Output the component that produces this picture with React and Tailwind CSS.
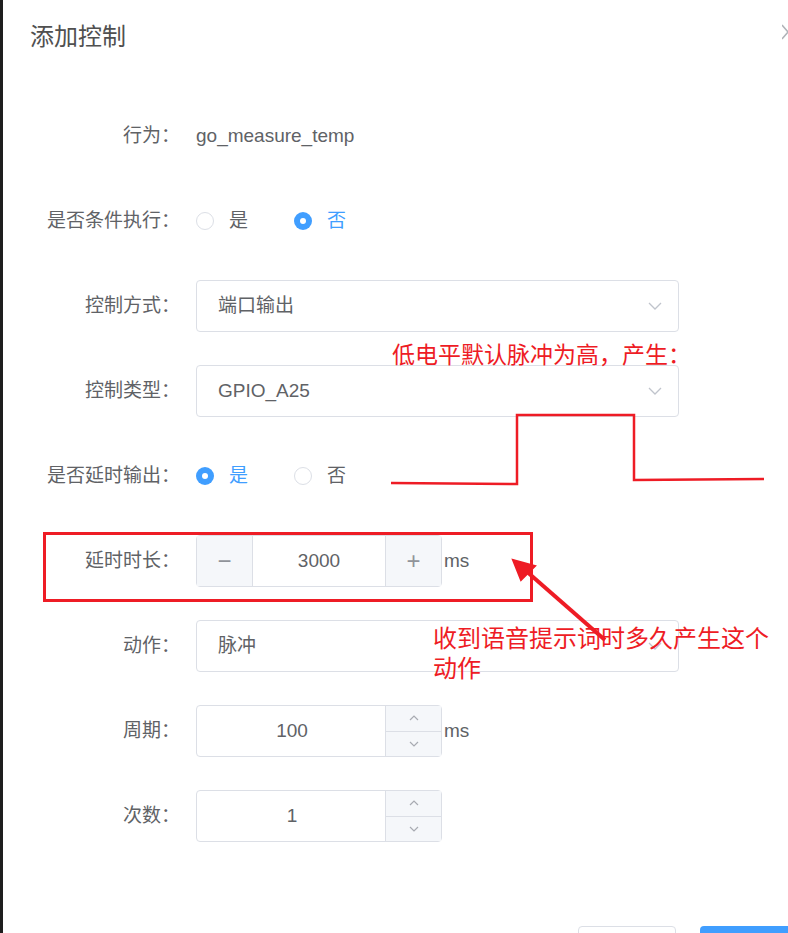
import React from "react";

const font = { fontFamily: '"Liberation Sans", "Noto Sans CJK SC", sans-serif' };

function Chevron({ up }) {
  return (
    <svg width="14" height="8" viewBox="0 0 14 8" fill="none" stroke="#c0c4cc" strokeWidth="1.3">
      {up ? <path d="M1 7 L7 1 L13 7" /> : <path d="M1 1 L7 7 L13 1" />}
    </svg>
  );
}

function Row({ label, children }) {
  return (
    <div className="flex h-[52px] items-center">
      <div className="w-[193px] shrink-0 pr-[16px] text-right text-[19px] text-[#606266]">{label}</div>
      {children}
    </div>
  );
}

function Radio({ checked, label }) {
  return (
    <div className="flex items-center gap-[15px]">
      {checked ? (
        <span className="flex h-[18px] w-[18px] items-center justify-center rounded-full bg-[#409eff]">
          <span className="h-[6px] w-[6px] rounded-full bg-white" />
        </span>
      ) : (
        <span className="h-[18px] w-[18px] rounded-full border border-[#dcdfe6] bg-white" />
      )}
      <span className={checked ? "text-[19px] text-[#409eff]" : "text-[19px] text-[#606266]"}>{label}</span>
    </div>
  );
}

function Select({ value }) {
  return (
    <div className="flex h-[52px] w-[483px] items-center justify-between rounded-[4px] border border-[#dcdfe6] pl-[21px] pr-[16px] text-[19px] text-[#606266]">
      <span>{value}</span>
      <Chevron />
    </div>
  );
}

function Stepper({ value }) {
  return (
    <div className="flex h-[52px] w-[246px] rounded-[4px] border border-[#dcdfe6] text-[19px] text-[#606266]">
      <div className="flex flex-1 items-center justify-center pl-[2px]">{value}</div>
      <div className="flex w-[56px] flex-col border-l border-[#dcdfe6] bg-[#f5f7fa]">
        <div className="flex flex-1 items-center justify-center border-b border-[#dcdfe6]">
          <svg width="10" height="6" viewBox="0 0 10 6" fill="none" stroke="#a8abb2" strokeWidth="1.2"><path d="M1 5 L5 1 L9 5" /></svg>
        </div>
        <div className="flex flex-1 items-center justify-center">
          <svg width="10" height="6" viewBox="0 0 10 6" fill="none" stroke="#a8abb2" strokeWidth="1.2"><path d="M1 1 L5 5 L9 1" /></svg>
        </div>
      </div>
    </div>
  );
}

export default function App() {
  return (
    <div className="flex h-[933px] w-[788px] overflow-hidden bg-white" style={font}>
      <div className="w-[3px] shrink-0 bg-[#1e1e1e]" />
      <div className="relative flex-1 bg-white">
        {/* header */}
        <div className="flex items-start justify-between pl-[27px] pt-[21px]">
          <h1 className="text-[24px] leading-[32px] text-[#505050]">添加控制</h1>
          <svg className="mt-[3px]" width="6" height="16" viewBox="0 0 6 16" fill="none" stroke="#b0b3b8" strokeWidth="1.5">
            <path d="M0 1 L6 8 M6 8 L0 15" />
          </svg>
        </div>

        {/* form */}
        <div className="mt-[57px] flex flex-col gap-[33px]">
          <Row label="行为：">
            <span className="text-[19px] text-[#606266]">go_measure_temp</span>
          </Row>
          <Row label="是否条件执行：">
            <div className="flex gap-[46px]">
              <Radio label="是" />
              <Radio checked label="否" />
            </div>
          </Row>
          <Row label="控制方式：">
            <Select value="端口输出" />
          </Row>
          <Row label="控制类型：">
            <Select value="GPIO_A25" />
          </Row>
          <Row label="是否延时输出：">
            <div className="flex gap-[46px]">
              <Radio checked label="是" />
              <Radio label="否" />
            </div>
          </Row>
          <Row label="延时时长：">
            <div className="flex h-[52px] w-[246px] rounded-[4px] border border-[#dcdfe6] text-[19px] text-[#606266]">
              <div className="flex w-[56px] items-center justify-center border-r border-[#dcdfe6] bg-[#f5f7fa] text-[24px] font-light text-[#909399]">−</div>
              <div className="flex flex-1 items-center justify-center">3000</div>
              <div className="flex w-[56px] items-center justify-center border-l border-[#dcdfe6] bg-[#f5f7fa] text-[24px] font-light text-[#909399]">+</div>
            </div>
            <span className="ml-[2px] text-[19px] text-[#606266]">ms</span>
          </Row>
          <Row label="动作：">
            <Select value="脉冲" />
          </Row>
          <Row label="周期：">
            <Stepper value="100" />
            <span className="ml-[2px] text-[19px] text-[#606266]">ms</span>
          </Row>
          <Row label="次数：">
            <Stepper value="1" />
          </Row>
        </div>

        {/* footer buttons */}
        <div className="mt-[84px] flex justify-end gap-[24px]">
          <div className="h-[44px] w-[98px] rounded-[4px] border border-[#dcdfe6] bg-white" />
          <div className="-mr-[20px] h-[44px] w-[108px] rounded-[4px] bg-[#409eff]" />
        </div>

        {/* red annotations */}
        <div className="absolute left-[389px] top-[339px] text-[23px] leading-[32px] text-[#ee1c25]">低电平默认脉冲为高，产生：</div>
        <svg className="absolute left-0 top-0" width="785" height="933" fill="none">
          <path d="M388 483 L514 484 L514 415 L631 415 L631 480 L761 479" stroke="#ee1c25" strokeWidth="2.5" />
          <rect x="41.5" y="533.5" width="487" height="67" stroke="#ee1c25" strokeWidth="3" />
          <path d="M602 640 L522 570" stroke="#ee1c25" strokeWidth="4" />
          <path d="M510 560 L532 566 L518 580 Z" fill="#ee1c25" stroke="#ee1c25" strokeWidth="2" />
        </svg>
        <div className="absolute left-[430px] top-[624px] w-[345px] text-[24px] leading-[30px] text-[#ee1c25]">收到语音提示词时多久产生这个动作</div>
      </div>
    </div>
  );
}
